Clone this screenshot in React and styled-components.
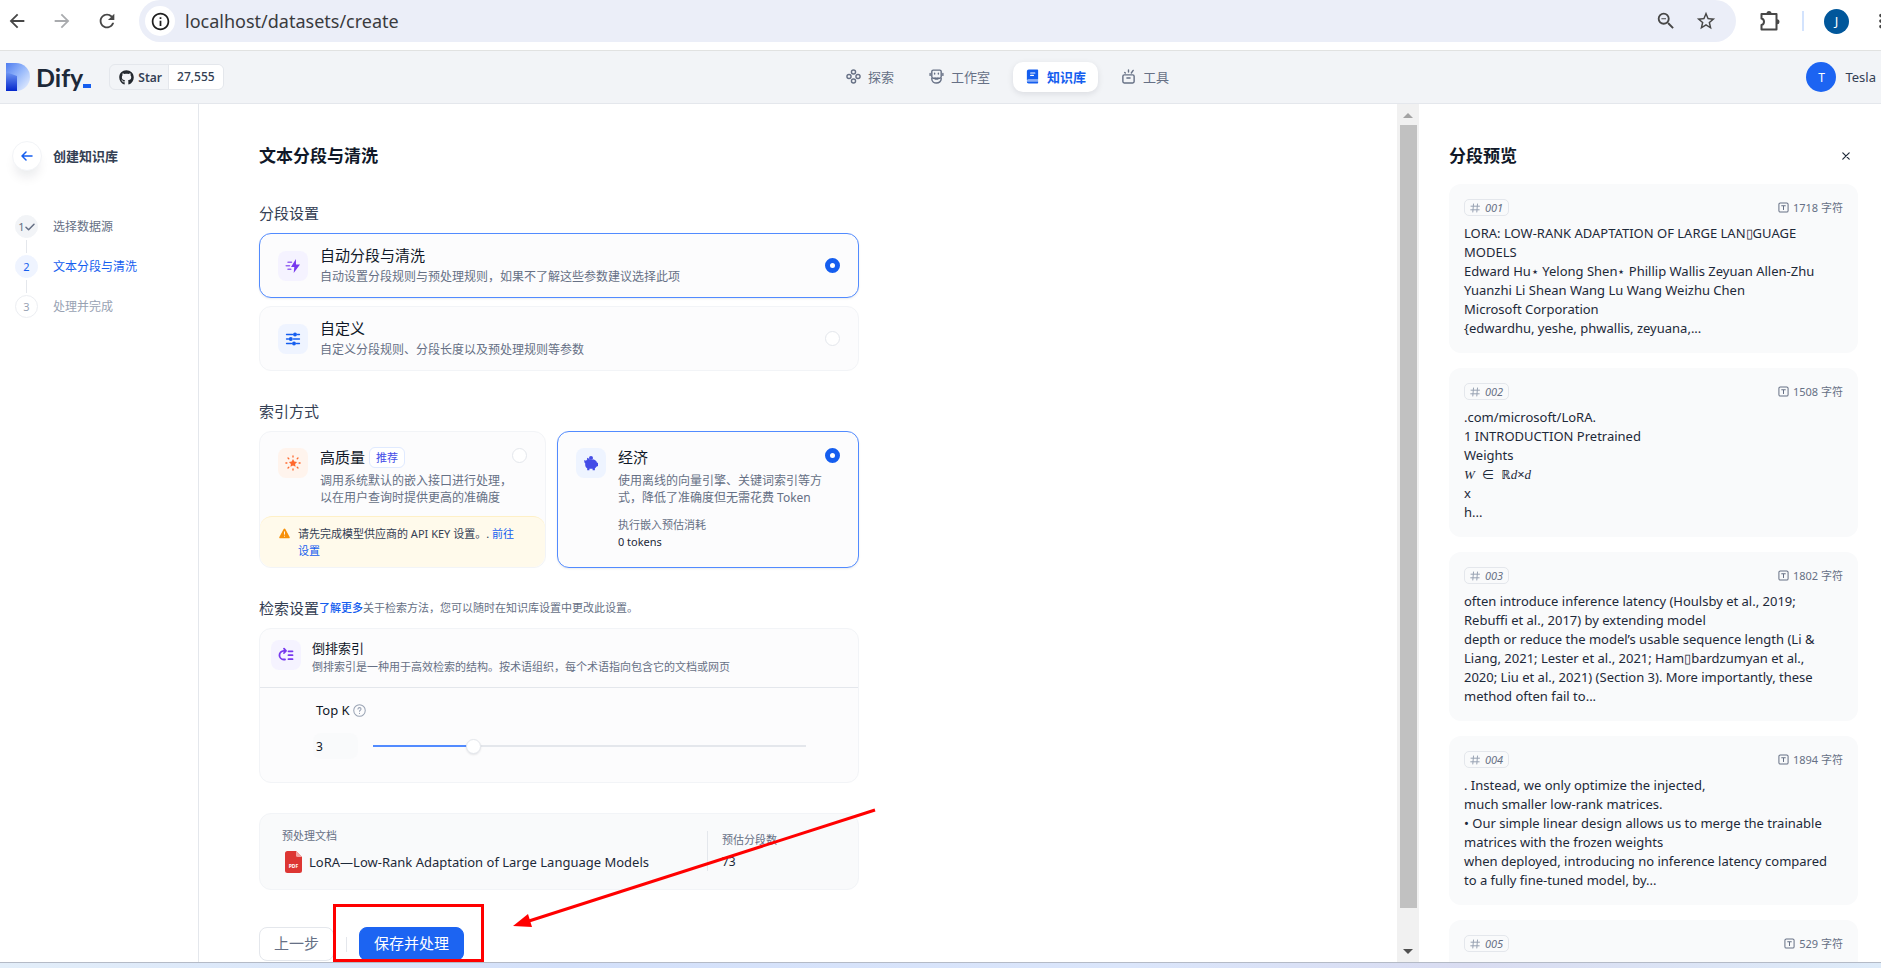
import React, { useState } from 'react';
import styled, { createGlobalStyle, css } from 'styled-components';
import { MdArrowBack, MdArrowForward, MdRefresh, MdInfoOutline, MdZoomOut, MdStarBorder, MdMoreVert } from 'react-icons/md';
import { FaGithub } from 'react-icons/fa';

const Global = createGlobalStyle`
  *, *::before, *::after { box-sizing: border-box; }
  html, body, #root { height: 100%; }
  body {
    margin: 0;
    overflow: hidden;
    background: #fff;
    color: #1d2939;
    font-family: "Noto Sans", "Noto Sans CJK SC", sans-serif;
    font-size: 13px;
  }
  h1, h2, h3, p { margin: 0; font-weight: 400; }
  button, input { font: inherit; color: inherit; margin: 0; padding: 0; border: 0; background: none; }
  button { cursor: pointer; }
  a { text-decoration: none; }
  svg { display: block; flex: none; }
`;

const Shell = styled.div`
  display: flex;
  flex-direction: column;
  height: 100vh;
`;

/* ---------- browser bar ---------- */

const BrowserBar = styled.div`
  display: flex;
  align-items: center;
  height: 51px;
  flex: none;
  padding: 0 0 8px 5px;
  border-bottom: 1px solid #e1e2e1;
  overflow: hidden;
`;

const BarButton = styled.button`
  display: flex;
  align-items: center;
  justify-content: center;
  flex: none;
  width: 24px;
  height: 24px;
  font-size: 22px;
  color: ${(p) => (p.$dim ? '#a9abae' : '#474747')};
`;

const NavButtons = styled.div`
  display: flex;
  flex: none;
  gap: 21px;
  width: 134px;
`;

const Omnibox = styled.div`
  display: flex;
  align-items: center;
  flex: 1;
  height: 42px;
  padding: 0 18px 0 6px;
  border-radius: 21px;
  background: #ebeef8;
  gap: 16px;
`;

const SiteInfo = styled.button`
  display: flex;
  align-items: center;
  justify-content: center;
  width: 30px;
  height: 30px;
  border-radius: 50%;
  background: #fff;
  color: #1f1f1f;
  font-size: 21px;
`;

const Address = styled.input`
  flex: 1;
  min-width: 0;
  margin-left: -6px;
  outline: 0;
  font-family: "Noto Sans", sans-serif;
  font-size: 18px;
  color: #3a3b3e;
`;

const BarEnd = styled.div`
  display: flex;
  align-items: center;
  flex: none;
  gap: 20px;
  width: 145px;
  padding-left: 22px;
`;

const BarRule = styled.span`
  flex: none;
  width: 2px;
  height: 20px;
  background: #d3e3fd;
`;

const Profile = styled.button`
  flex: none;
  width: 25px;
  height: 25px;
  border-radius: 50%;
  background: #01579b;
  color: #fff;
  font-size: 13px;
`;

/* ---------- app header ---------- */

const Header = styled.header`
  display: flex;
  align-items: center;
  justify-content: space-between;
  flex: none;
  height: 53px;
  padding: 0 5px 0 6px;
  background: #f2f4f7;
  border-bottom: 1px solid #e4e7ec;
`;

const Brand = styled.div`
  display: flex;
  align-items: center;
  gap: 18px;
`;

const Logo = styled.a`
  display: flex;
  align-items: center;
  gap: 6px;
  font-family: Lato, sans-serif;
  font-weight: 700;
  font-size: 25px;
  line-height: 30px;
  color: #1d2939;
`;

const Wordmark = styled.span`
  display: flex;
  align-items: flex-end;
  &::after {
    content: "";
    width: 8px;
    height: 4px;
    margin-bottom: 4px;
    background: #155eef;
  }
`;

const StarBox = styled.a`
  display: flex;
  height: 26px;
  border: 1px solid #e4e7ec;
  border-radius: 6px;
  overflow: hidden;
  font-size: 12px;
  line-height: 23px;
  color: #344054;
`;

const StarLabel = styled.span`
  display: flex;
  align-items: center;
  gap: 4px;
  padding: 0 6px 0 9px;
  font-weight: 600;
  border-right: 1px solid #e4e7ec;
  svg { color: #24292f; }
`;

const StarCount = styled.span`
  padding: 0 8px;
  background: #fff;
  font-weight: 500;
`;

const Nav = styled.nav`
  display: flex;
  gap: 11px;
`;

const NavItem = styled.a`
  display: flex;
  align-items: center;
  gap: 7px;
  height: 30px;
  padding: 0 12px 2px;
  border-radius: 10px;
  font-size: 13px;
  color: #667085;
  ${(p) => p.$active && css`
    background: #fff;
    color: #155eef;
    font-weight: 600;
    box-shadow: 0 2px 6px rgba(16, 24, 40, 0.1);
  `}
`;

const Account = styled.button`
  display: flex;
  align-items: center;
  gap: 9px;
  padding-left: 15px;
  font-size: 13px;
  color: #344054;
`;

const Avatar = styled.span`
  display: flex;
  align-items: center;
  justify-content: center;
  width: 30px;
  height: 30px;
  border-radius: 50%;
  background: #1c64f2;
  color: #fff;
  font-size: 12px;
`;

/* ---------- body ---------- */

const Body = styled.div`
  display: flex;
  flex: 1;
  min-height: 0;
`;

const Sidebar = styled.aside`
  flex: none;
  width: 199px;
  padding: 37px 12px;
  border-right: 1px solid #e4e7ec;
`;

const BackRow = styled.div`
  display: flex;
  align-items: center;
  gap: 11px;
  font-weight: 600;
  color: #344054;
`;

const SideText = styled.span`
  padding-bottom: 2px;
`;

const BackButton = styled.button`
  display: flex;
  align-items: center;
  justify-content: center;
  width: 30px;
  height: 30px;
  border: 1px solid #f2f4f7;
  border-radius: 50%;
  background: #fff;
  box-shadow: 0 9px 12px -3px rgba(16, 24, 40, 0.09);
`;

const Steps = styled.ol`
  display: flex;
  flex-direction: column;
  margin: 44px 0 0 3px;
  padding: 0;
  list-style: none;
`;

const tones = {
  done: { bg: '#f2f4f7', border: '#f2f4f7', ink: '#667085', text: '#667085' },
  current: { bg: '#eff4ff', border: '#eff4ff', ink: '#155eef', text: '#155eef' },
  todo: { bg: '#fff', border: '#eceef2', ink: '#98a2b3', text: '#98a2b3' },
};

const Step = styled.li`
  display: flex;
  align-items: center;
  gap: 15px;
  font-size: 12px;
  color: ${(p) => tones[p.$tone].text};
`;

const StepMark = styled.span`
  display: flex;
  align-items: center;
  justify-content: center;
  width: 23px;
  height: 23px;
  border-radius: 50%;
  font-size: 11px;
  color: ${(p) => tones[p.$tone].ink};
  background: ${(p) => tones[p.$tone].bg};
  border: 1px solid ${(p) => tones[p.$tone].border};
`;

const StepLine = styled.li`
  width: 1px;
  height: 13px;
  margin: 2px 0 2px 11px;
  background: #e4e7ec;
`;

const Main = styled.main`
  flex: 1;
  min-width: 0;
  padding: 40px 0 0 60px;
  overflow: hidden;
`;

const Column = styled.div`
  position: relative;
  max-width: 600px;
`;

const Title = styled.h1`
  font-size: 17px;
  line-height: 24px;
  font-weight: 700;
  color: #101828;
`;

const SectionLabel = styled.h2`
  display: flex;
  align-items: center;
  margin: ${(p) => (p.$first ? 34 : 29)}px 0 9px;
  font-size: 15px;
  line-height: 22px;
  color: #344054;
`;

const LabelNote = styled.span`
  font-size: 11px;
  color: #667085;
  a { color: #155eef; font-weight: 500; }
`;

const Stack = styled.div`
  display: flex;
  flex-direction: column;
  gap: 8px;
`;

const Pair = styled.div`
  display: grid;
  grid-template-columns: minmax(0, 19fr) minmax(0, 20fr);
  gap: 11px;
`;

const cardBase = css`
  border: 1px solid ${(p) => (p.$on ? '#528bff' : '#f2f4f7')};
  border-radius: 12px;
  background: #fcfcfd;
  ${(p) => p.$on && 'box-shadow: 0 1px 2px rgba(16, 24, 40, 0.08);'}
`;

const OptionCard = styled.label`
  ${cardBase}
  display: flex;
  align-items: center;
  gap: 12px;
  height: 65px;
  padding: 0 18px;
`;

const MethodCard = styled.div`
  ${cardBase}
  display: flex;
  flex-direction: column;
  height: 137px;
`;

const MethodLabel = styled.label`
  display: flex;
  flex: 1;
  gap: 12px;
  padding: 16px 18px 0;
`;

const IconTile = styled.span`
  display: flex;
  align-items: center;
  justify-content: center;
  flex: none;
  width: 30px;
  height: 30px;
  border-radius: 8px;
  background: ${(p) => p.$bg};
`;

const OptionText = styled.span`
  display: flex;
  flex-direction: column;
  flex: 1;
  min-width: 0;
  gap: ${(p) => (p.$roomy ? 6 : 4)}px;
  padding-bottom: 1px;
`;

const OptionTitle = styled.span`
  display: flex;
  align-items: center;
  gap: 4px;
  height: 18px;
  font-size: 15px;
  line-height: 18px;
  color: #101828;
`;

const OptionDesc = styled.span`
  font-size: 12px;
  line-height: 17px;
  color: #667085;
  white-space: ${(p) => (p.$lines ? 'pre' : 'nowrap')};
`;

const Badge = styled.span`
  padding: 0 6px;
  border: 1px solid #e0eaff;
  border-radius: 6px;
  font-size: 11px;
  line-height: 19px;
  color: #444ce7;
  background: #fff;
`;

const Radio = styled.input.attrs({ type: 'radio' })`
  appearance: none;
  flex: none;
  width: 15px;
  height: 15px;
  border: 1px solid #e4e7ec;
  border-radius: 50%;
  background: #fff;
  &:checked { border: 5px solid #155eef; }
`;

/* the radio of a method card hangs in its corner, so the text may run under it */
const CornerRadio = styled(Radio)`
  margin-left: -27px;
`;

const Warning = styled.p`
  display: flex;
  gap: 8px;
  height: 51px;
  padding: 8px 18px 0 19px;
  border-top: 1px solid #fef0c7;
  border-radius: 12px;
  background: #fffaeb;
  font-size: 11px;
  line-height: 17px;
  color: #344054;
  svg { margin-top: 3px; }
  a { color: #155eef; }
`;

const Estimate = styled.span`
  display: flex;
  flex-direction: column;
  margin-top: 4px;
  font-size: 11px;
  line-height: 17px;
  color: #667085;
`;

const Strong = styled.span`
  color: #1d2939;
`;

const RetrievalCard = styled.section`
  ${cardBase}
  height: 155px;
`;

const RetrievalHead = styled.div`
  display: flex;
  gap: 11px;
  height: 59px;
  padding: 11px;
  border-bottom: 1px solid #e4e7ec;
`;

const RetrievalTitle = styled.h3`
  font-size: 13px;
  line-height: 17px;
  color: #101828;
`;

const RetrievalDesc = styled.p`
  margin-top: 1px;
  font-size: 11px;
  line-height: 17px;
  color: #667085;
  white-space: nowrap;
`;

const RetrievalBody = styled.div`
  padding: 13px 52px 0 53px;
`;

const FieldLabel = styled.label`
  display: flex;
  align-items: center;
  gap: 3px;
  padding-left: 3px;
  line-height: 18px;
  color: #101828;
`;

const SliderRow = styled.div`
  display: flex;
  align-items: center;
  gap: 15px;
  margin-top: 14px;
`;

const NumberBox = styled.input`
  width: 45px;
  height: 26px;
  padding-left: 3px;
  border-radius: 8px;
  background: #f9fafb;
  font-size: 12px;
  color: #101828;
`;

const Range = styled.input.attrs({ type: 'range' })`
  appearance: none;
  flex: 1;
  min-width: 0;
  height: 15px;
  background: linear-gradient(to right, #528bff ${(p) => p.$fill}%, #e4e7ec ${(p) => p.$fill}%) center / 100% 2px no-repeat;
  &::-webkit-slider-thumb {
    appearance: none;
    width: 15px;
    height: 15px;
    border: 1px solid #e4e7ec;
    border-radius: 50%;
    background: #fff;
    box-shadow: 0 1px 2px rgba(16, 24, 40, 0.1);
  }
`;

const FileCard = styled.section`
  display: flex;
  height: 77px;
  margin-top: 30px;
  padding: 0 22px;
  border: 1px solid #f2f4f7;
  border-radius: 12px;
  background: #f9fafb;
`;

const FileInfo = styled.div`
  flex: 1;
  padding-top: 13px;
`;

const FileName = styled.p`
  display: flex;
  align-items: center;
  gap: 6px;
  margin-top: 7px;
  padding-left: 3px;
  font-size: 13px;
  line-height: 22px;
  color: #1d2939;
`;

const SmallLabel = styled.p`
  font-size: 11px;
  line-height: 17px;
  color: #667085;
`;

const Segments = styled.div`
  width: 129px;
  height: 40px;
  margin-top: 17px;
  padding-left: 14px;
  border-left: 1px solid #e4e7ec;
`;

const SegmentCount = styled.p`
  margin-top: 5px;
  font-size: 12px;
  line-height: 17px;
`;

const Actions = styled.div`
  display: flex;
  align-items: center;
  margin-top: 37px;
  gap: 12px;
`;

const Button = styled.button`
  height: 34px;
  padding: 0 14px 2px;
  border: 1px solid ${(p) => (p.$primary ? '#1c64f2' : '#e4e7ec')};
  border-radius: 8px;
  background: ${(p) => (p.$primary ? '#1c64f2' : '#fff')};
  color: ${(p) => (p.$primary ? '#fff' : '#667085')};
  font-size: 15px;
  line-height: 22px;
`;

const ActionRule = styled.span`
  width: 1px;
  height: 15px;
  background: #e4e7ec;
`;

/* red marks drawn over the form */
const Mark = styled.svg`
  position: absolute;
  left: 74px;
  bottom: -1px;
  pointer-events: none;
`;

/* ---------- scrollbar ---------- */

const Scrollbar = styled.div`
  display: flex;
  flex-direction: column;
  align-items: center;
  flex: none;
  width: 22px;
  background: #f1f1f1;
`;

const ScrollButton = styled.button`
  display: flex;
  align-items: center;
  justify-content: center;
  width: 17px;
  height: 21px;
`;

const ScrollTrack = styled.div`
  flex: 1;
  width: 17px;
`;

const ScrollThumb = styled.div`
  height: 96%;
  background: #c1c1c1;
`;

/* ---------- preview ---------- */

const Preview = styled.aside`
  flex: none;
  width: 462px;
  padding: 40px 23px 0 30px;
  overflow: hidden;
`;

const PreviewHead = styled.div`
  display: flex;
  align-items: center;
  justify-content: space-between;
  padding-right: 5px;
  margin-bottom: 16px;
`;

const IconButton = styled.button`
  display: flex;
  padding: 3px;
`;

const Chunks = styled.div`
  display: flex;
  flex-direction: column;
  gap: 15px;
`;

const Chunk = styled.article`
  flex: none;
  height: 169px;
  padding: 15px;
  border-radius: 12px;
  background: #f9fafb;
`;

const ChunkHead = styled.div`
  display: flex;
  align-items: center;
  justify-content: space-between;
  margin-bottom: 8px;
  font-size: 11px;
  line-height: 15px;
  color: #667085;
`;

const ChunkTag = styled.span`
  display: flex;
  align-items: center;
  gap: 5px;
  padding: 0 5px;
  border: 1px solid #e4e7ec;
  border-radius: 5px;
  font-style: italic;
`;

const ChunkSize = styled.span`
  display: flex;
  align-items: center;
  gap: 4px;
`;

const ChunkText = styled.p`
  font-size: 13px;
  line-height: 19px;
  color: #1d2939;
  white-space: pre;
  i { font-family: "Liberation Serif", serif; }
`;

const Taskbar = styled.footer`
  flex: none;
  height: 6px;
  border-top: 1px solid #b4bac6;
  background: linear-gradient(to right, #e3eef9, #d3e0fa 30%, #dbe6fb 60%, #d9dcf1 78%, #deebf9);
`;

/* ---------- icons ---------- */

const line = { fill: 'none', stroke: 'currentColor', strokeLinecap: 'round', strokeLinejoin: 'round' };

const ExploreIcon = () => (
  <svg width="15" height="15" viewBox="0 0 16 16" {...line} strokeWidth="1.5">
    <circle cx="8" cy="3.2" r="2.2" /><circle cx="8" cy="12.8" r="2.2" />
    <circle cx="3.2" cy="8" r="2.2" /><circle cx="12.8" cy="8" r="2.2" />
  </svg>
);
const RobotIcon = () => (
  <svg width="15" height="15" viewBox="0 0 16 16" {...line} strokeWidth="1.5">
    <rect x="3" y="1.2" width="10" height="8.6" rx="1.5" />
    <path d="M3 10v.6a5 4.400 0 0 0 10 0V10M1.200 4.800v2M14.800 4.800v2M6 4.600v.8M10 4.600v.8M6.500 9.900v.8h3v-.8" />
  </svg>
);
const BookIcon = () => (
  <svg width="15" height="15" viewBox="0 0 16 16">
    <path fill="currentColor" d="M4 .5h9.200a.8.800 0 0 1 .8.800v9.700H4.200c-.8 0-1.500.3-2.200.9V2.500A2 2 0 0 1 4 .5z" />
    <path fill="currentColor" opacity=".5" d="M4.200 11H14v2.200H2V13c.2-1.200 1-2 2.200-2z" />
    <path fill="currentColor" d="M2 13.200h12v1.500a.8.800 0 0 1-.8.800H4a2 2 0 0 1-2-2.300z" />
    <path stroke="#fff" strokeWidth="1.200" strokeLinecap="round" d="M6 4.200h4.500M6 6.800h3" />
  </svg>
);
const ToolsIcon = () => (
  <svg width="15" height="15" viewBox="0 0 16 16" {...line} strokeWidth="1.500">
    <rect x="2" y="6.300" width="12" height="8.600" rx="1.500" />
    <path d="M6.300 9.600h3.400M4 3.700l.6.600M8 1v2.300M13 1.500l-2 2.800" />
  </svg>
);
const LogoMark = () => (
  <svg width="24" height="28" viewBox="0 0 24 28">
    <defs>
      <linearGradient id="lg-top" x1="0" y1="0" x2="1" y2="1">
        <stop offset="0" stopColor="#4f7df0" /><stop offset=".5" stopColor="#9cbcfb" /><stop offset="1" stopColor="#f0f5fe" />
      </linearGradient>
      <linearGradient id="lg-stem" x1="0" y1="0" x2="0" y2="1">
        <stop offset="0" stopColor="#6f98f4" /><stop offset="1" stopColor="#0326cc" />
      </linearGradient>
    </defs>
    <path d="M0 0h10a14 14 0 0 1 0 28H0z" fill="url(#lg-top)" />
    <path d="M0 9l11 4v15H0z" fill="url(#lg-stem)" />
  </svg>
);
const ArrowLeftIcon = () => (
  <svg width="12" height="10" viewBox="0 0 12 10" {...line} stroke="#155eef" strokeWidth="1.500">
    <path d="M11 5H1M5 1L1 5l4 4" />
  </svg>
);
const CheckIcon = () => (
  <svg width="10" height="8" viewBox="0 0 10 8" {...line} strokeWidth="1.500"><path d="M1 4.200L3.600 6.700 9 1.200" /></svg>
);
const BoltIcon = () => (
  <svg width="16" height="16" viewBox="0 0 16 16">
    <path fill="#7839ee" d="M10.900 1L6 8.900h3.300L8.700 15 15 6.600h-4z" />
    <path stroke="#7839ee" opacity=".75" strokeWidth="1.500" strokeLinecap="round" d="M3 4.200h3.500M1.200 7.700h3.300M3 11.200h2.800" />
  </svg>
);
const SlidersIcon = () => (
  <svg width="16" height="16" viewBox="0 0 16 16">
    <path stroke="#155eef" strokeWidth="1.300" strokeLinecap="round" d="M1.500 3.500h6M12.500 3.500h2M1.500 8h2M8.500 8h6M1.500 12.500h5M11.500 12.500h3" />
    <g fill="#155eef"><circle cx="10" cy="3.500" r="2" /><circle cx="5.800" cy="8" r="2" /><circle cx="9" cy="12.500" r="2" /></g>
  </svg>
);
const StarBurstIcon = () => (
  <svg width="16" height="16" viewBox="0 0 16 16">
    <path fill="#ff692e" d="M8 4l1.300 2.500 2.800.4-2 2 .5 2.800L8 10.400l-2.600 1.300.5-2.800-2-2 2.800-.4z" />
    <path stroke="#ff692e" strokeWidth="1.300" strokeLinecap="round" d="M8 .9v1.200M8 13.900v1.200M.9 8h1M14.100 8h1M3 3l.8.800M13 3l-.8.800M3 13l.8-.8M13 13l-.8-.8" />
  </svg>
);
const PiggyIcon = () => (
  <svg width="16" height="16" viewBox="0 0 16 16" fill="#444ce7">
    <circle cx="8" cy="2.900" r="2" />
    <path d="M1.400 5.200c.7-.3 1.100.1 1.400.8.300-.5.800-1 1.400-1.400l-.2-1.900c1 .1 1.800.6 2.300 1.400.8 1.300 2.700 1.300 3.500.1 2.300.5 3.700 1.500 4.100 3.200l1.100.5v3.200l-1.700.6c-.4.800-.9 1.300-1.400 1.600v1.900h-2.300v-1.400H6.400v1.400H4.200v-1.900C3 12.500 2.300 11.300 2.200 9.900c0-.5 0-1 .1-1.500C1.500 8 1 6.500 1.400 5.200z" />
  </svg>
);
const IndexIcon = () => (
  <svg width="16" height="16" viewBox="0 0 16 16" {...line} stroke="#7839ee" strokeWidth="1.800">
    <path d="M7 3.800H5.800a4.300 4.300 0 0 0 0 8.700H7M6 1.600l2 2.200-2 2.200M10.500 4.300h4M10.500 8.200h4M10.500 12.200h4" />
  </svg>
);
const WarningIcon = () => (
  <svg width="11" height="11" viewBox="0 0 12 12">
    <path fill="#f79009" d="M6 .6c.4 0 .7.200.9.500l4.700 8.600c.4.700-.1 1.500-.9 1.500H1.300c-.8 0-1.300-.8-.9-1.500L5.100 1.100c.2-.3.500-.5.900-.5z" />
    <path stroke="#fff" strokeWidth="1" strokeLinecap="round" d="M6 4.200v2.600M6 8.900v.1" />
  </svg>
);
const HelpIcon = () => (
  <svg width="13" height="13" viewBox="0 0 14 14" {...line} stroke="#98a2b3" strokeWidth="1.100">
    <circle cx="7" cy="7" r="6.200" />
    <path d="M5.300 5.500c.1-1 .8-1.600 1.700-1.600s1.700.6 1.700 1.500c0 1.300-1.700 1.300-1.700 2.500M7 10v.1" />
  </svg>
);
const PdfIcon = () => (
  <svg width="18" height="22" viewBox="0 0 18 22">
    <path fill="#dd3633" d="M2.500 0H11l6 6v13.500a2.500 2.500 0 0 1-2.500 2.500h-12A2.500 2.500 0 0 1 0 19.500v-17A2.500 2.500 0 0 1 2.500 0z" />
    <path fill="#f3a5a3" d="M11 0l6 6h-4.500A1.500 1.500 0 0 1 11 4.500z" />
    <text x="8.500" y="17" textAnchor="middle" fontSize="5" fontWeight="700" fill="#fff" fontFamily="Noto Sans, sans-serif">PDF</text>
  </svg>
);
const HashIcon = () => (
  <svg width="10" height="10" viewBox="0 0 10 10" {...line} stroke="#98a2b3" strokeWidth="1">
    <path d="M3.500 1l-.7 8M7.500 1l-.7 8M1 3.200h8.500M.7 6.800h8.500" />
  </svg>
);
const CharIcon = () => (
  <svg width="11" height="11" viewBox="0 0 12 12" {...line} strokeWidth="1.100">
    <rect x="1" y="1" width="10" height="10" rx="1.500" />
    <path d="M4 4h4M6 4v4.200" />
  </svg>
);
const CloseIcon = () => (
  <svg width="8" height="8" viewBox="0 0 8 8" {...line} stroke="#1d2939" strokeWidth="1.200"><path d="M.8.800l6.400 6.400M7.200.800L.8 7.200" /></svg>
);
const PuzzleIcon = () => (
  <svg width="22" height="22" viewBox="0 0 22 22">
    <path fill="none" stroke="currentColor" strokeWidth="2" strokeLinejoin="round" d="M2.500 4h15v15.500h-15v-4.500c1.700-.4 2.500-1.600 2.500-3.200s-.8-2.900-2.500-3.300z" />
    <path fill="currentColor" d="M7.500 3.500a2.500 2.500 0 0 1 5 0zM18 9.300a2.500 2.500 0 0 1 0 5z" />
  </svg>
);

const steps = [
  { n: '1', label: '选择数据源', tone: 'done' },
  { n: '2', label: '文本分段与清洗', tone: 'current' },
  { n: '3', label: '处理并完成', tone: 'todo' },
];

const chunks = [
  { id: '001', size: 1718, text: 'LORA: LOW-RANK ADAPTATION OF LARGE LAN▯GUAGE\nMODELS\nEdward Hu⋆ Yelong Shen⋆ Phillip Wallis Zeyuan Allen-Zhu\nYuanzhi Li Shean Wang Lu Wang Weizhu Chen\nMicrosoft Corporation\n{edwardhu, yeshe, phwallis, zeyuana,...' },
  { id: '002', size: 1508, text: <>{'.com/microsoft/LoRA.\n1 INTRODUCTION Pretrained\nWeights\n'}<i>W</i>{'  ∈  ℝ'}<i>d</i>×<i>d</i>{'\nx\nh...'}</> },
  { id: '003', size: 1802, text: 'often introduce inference latency (Houlsby et al., 2019;\nRebuffi et al., 2017) by extending model\ndepth or reduce the model’s usable sequence length (Li &\nLiang, 2021; Lester et al., 2021; Ham▯bardzumyan et al.,\n2020; Liu et al., 2021) (Section 3). More importantly, these\nmethod often fail to...' },
  { id: '004', size: 1894, text: '. Instead, we only optimize the injected,\nmuch smaller low-rank matrices.\n• Our simple linear design allows us to merge the trainable\nmatrices with the frozen weights\nwhen deployed, introducing no inference latency compared\nto a fully fine-tuned model, by...' },
  { id: '005', size: 529, text: '' },
];

export default function App() {
  const [segment, setSegment] = useState('auto');
  const [method, setMethod] = useState('economy');
  const [topK, setTopK] = useState(3);

  return (
    <Shell>
      <Global />
      <BrowserBar>
        <NavButtons>
          <BarButton aria-label="Back"><MdArrowBack /></BarButton>
          <BarButton aria-label="Forward" $dim><MdArrowForward /></BarButton>
          <BarButton aria-label="Reload"><MdRefresh /></BarButton>
        </NavButtons>
        <Omnibox>
          <SiteInfo aria-label="Site information"><MdInfoOutline /></SiteInfo>
          <Address aria-label="Address" defaultValue="localhost/datasets/create" />
          <BarButton aria-label="Zoom"><MdZoomOut /></BarButton>
          <BarButton aria-label="Bookmark"><MdStarBorder /></BarButton>
        </Omnibox>
        <BarEnd>
          <BarButton aria-label="Extensions"><PuzzleIcon /></BarButton>
          <BarRule />
          <Profile>J</Profile>
          <BarButton aria-label="Menu"><MdMoreVert /></BarButton>
        </BarEnd>
      </BrowserBar>

      <Header>
        <Brand>
          <Logo href="#"><LogoMark /><Wordmark>Dify</Wordmark></Logo>
          <StarBox href="#">
            <StarLabel><FaGithub size={15} />Star</StarLabel>
            <StarCount>27,555</StarCount>
          </StarBox>
        </Brand>
        <Nav>
          <NavItem href="#"><ExploreIcon />探索</NavItem>
          <NavItem href="#"><RobotIcon />工作室</NavItem>
          <NavItem href="#" $active><BookIcon />知识库</NavItem>
          <NavItem href="#"><ToolsIcon />工具</NavItem>
        </Nav>
        <Account><Avatar>T</Avatar>Tesla</Account>
      </Header>

      <Body>
        <Sidebar>
          <BackRow>
            <BackButton aria-label="返回"><ArrowLeftIcon /></BackButton>
            <SideText>创建知识库</SideText>
          </BackRow>
          <Steps>
            {steps.map((s, i) => (
              <React.Fragment key={s.n}>
                {i > 0 && <StepLine aria-hidden="true" />}
                <Step $tone={s.tone}>
                  <StepMark $tone={s.tone}>{s.n}{s.tone === 'done' && <CheckIcon />}</StepMark>
                  <SideText>{s.label}</SideText>
                </Step>
              </React.Fragment>
            ))}
          </Steps>
        </Sidebar>

        <Main>
          <Column>
            <Title>文本分段与清洗</Title>

            <SectionLabel $first>分段设置</SectionLabel>
            <Stack>
              <OptionCard $on={segment === 'auto'}>
                <IconTile $bg="#f5f3ff"><BoltIcon /></IconTile>
                <OptionText>
                  <OptionTitle>自动分段与清洗</OptionTitle>
                  <OptionDesc>自动设置分段规则与预处理规则，如果不了解这些参数建议选择此项</OptionDesc>
                </OptionText>
                <Radio name="segment" checked={segment === 'auto'} onChange={() => setSegment('auto')} />
              </OptionCard>
              <OptionCard $on={segment === 'custom'}>
                <IconTile $bg="#eff4ff"><SlidersIcon /></IconTile>
                <OptionText>
                  <OptionTitle>自定义</OptionTitle>
                  <OptionDesc>自定义分段规则、分段长度以及预处理规则等参数</OptionDesc>
                </OptionText>
                <Radio name="segment" checked={segment === 'custom'} onChange={() => setSegment('custom')} />
              </OptionCard>
            </Stack>

            <SectionLabel>索引方式</SectionLabel>
            <Pair>
              <MethodCard $on={method === 'quality'}>
                <MethodLabel>
                  <IconTile $bg="#fff4ed"><StarBurstIcon /></IconTile>
                  <OptionText $roomy>
                    <OptionTitle>高质量<Badge>推荐</Badge></OptionTitle>
                    <OptionDesc $lines>{'调用系统默认的嵌入接口进行处理，\n以在用户查询时提供更高的准确度'}</OptionDesc>
                  </OptionText>
                  <CornerRadio name="method" checked={method === 'quality'} onChange={() => setMethod('quality')} />
                </MethodLabel>
                <Warning>
                  <WarningIcon />
                  <span>请先完成模型供应商的 API KEY 设置。. <a href="#">前往<br />设置</a></span>
                </Warning>
              </MethodCard>
              <MethodCard $on={method === 'economy'}>
                <MethodLabel>
                  <IconTile $bg="#eef4ff"><PiggyIcon /></IconTile>
                  <OptionText $roomy>
                    <OptionTitle>经济</OptionTitle>
                    <OptionDesc $lines>{'使用离线的向量引擎、关键词索引等方\n式，降低了准确度但无需花费 Token'}</OptionDesc>
                    <Estimate>执行嵌入预估消耗<Strong>0 tokens</Strong></Estimate>
                  </OptionText>
                  <CornerRadio name="method" checked={method === 'economy'} onChange={() => setMethod('economy')} />
                </MethodLabel>
              </MethodCard>
            </Pair>

            <SectionLabel>
              检索设置
              <LabelNote><a href="#">了解更多</a>关于检索方法，您可以随时在知识库设置中更改此设置。</LabelNote>
            </SectionLabel>
            <RetrievalCard>
              <RetrievalHead>
                <IconTile $bg="#f5f3ff"><IndexIcon /></IconTile>
                <div>
                  <RetrievalTitle>倒排索引</RetrievalTitle>
                  <RetrievalDesc>倒排索引是一种用于高效检索的结构。按术语组织，每个术语指向包含它的文档或网页</RetrievalDesc>
                </div>
              </RetrievalHead>
              <RetrievalBody>
                <FieldLabel htmlFor="topk">Top K<HelpIcon /></FieldLabel>
                <SliderRow>
                  <NumberBox id="topk" inputMode="numeric" value={topK} onChange={(e) => setTopK(Number(e.target.value) || 1)} />
                  <Range aria-label="Top K" min="1" max="10" value={topK} $fill={((topK - 1) / 9) * 100} onChange={(e) => setTopK(Number(e.target.value))} />
                </SliderRow>
              </RetrievalBody>
            </RetrievalCard>

            <FileCard>
              <FileInfo>
                <SmallLabel>预处理文档</SmallLabel>
                <FileName><PdfIcon />LoRA—Low-Rank Adaptation of Large Language Models</FileName>
              </FileInfo>
              <Segments>
                <SmallLabel>预估分段数</SmallLabel>
                <SegmentCount>73</SegmentCount>
              </Segments>
            </FileCard>

            <Actions>
              <Button>上一步</Button>
              <ActionRule />
              <Button $primary>保存并处理</Button>
            </Actions>

            <Mark width="546" height="156" viewBox="0 0 546 156" aria-hidden="true">
              <rect x="1.500" y="99.500" width="148" height="55" fill="none" stroke="#f00" strokeWidth="3" />
              <path d="M542 4L196 115" stroke="#f00" strokeWidth="3" />
              <path d="M180 120l15-12 4 13z" fill="#f00" />
            </Mark>
          </Column>
        </Main>

        <Scrollbar>
          <ScrollButton aria-label="Scroll up">
            <svg width="10" height="6" viewBox="0 0 10 6"><path d="M0 6l5-5 5 5z" fill="#a3a3a3" /></svg>
          </ScrollButton>
          <ScrollTrack><ScrollThumb /></ScrollTrack>
          <ScrollButton aria-label="Scroll down">
            <svg width="10" height="6" viewBox="0 0 10 6"><path d="M0 0l5 5 5-5z" fill="#505050" /></svg>
          </ScrollButton>
        </Scrollbar>

        <Preview>
          <PreviewHead>
            <Title as="h2">分段预览</Title>
            <IconButton aria-label="关闭"><CloseIcon /></IconButton>
          </PreviewHead>
          <Chunks>
            {chunks.map((c) => (
              <Chunk key={c.id}>
                <ChunkHead>
                  <ChunkTag><HashIcon />{c.id}</ChunkTag>
                  <ChunkSize><CharIcon />{c.size} 字符</ChunkSize>
                </ChunkHead>
                <ChunkText>{c.text}</ChunkText>
              </Chunk>
            ))}
          </Chunks>
        </Preview>
      </Body>
      <Taskbar />
    </Shell>
  );
}
